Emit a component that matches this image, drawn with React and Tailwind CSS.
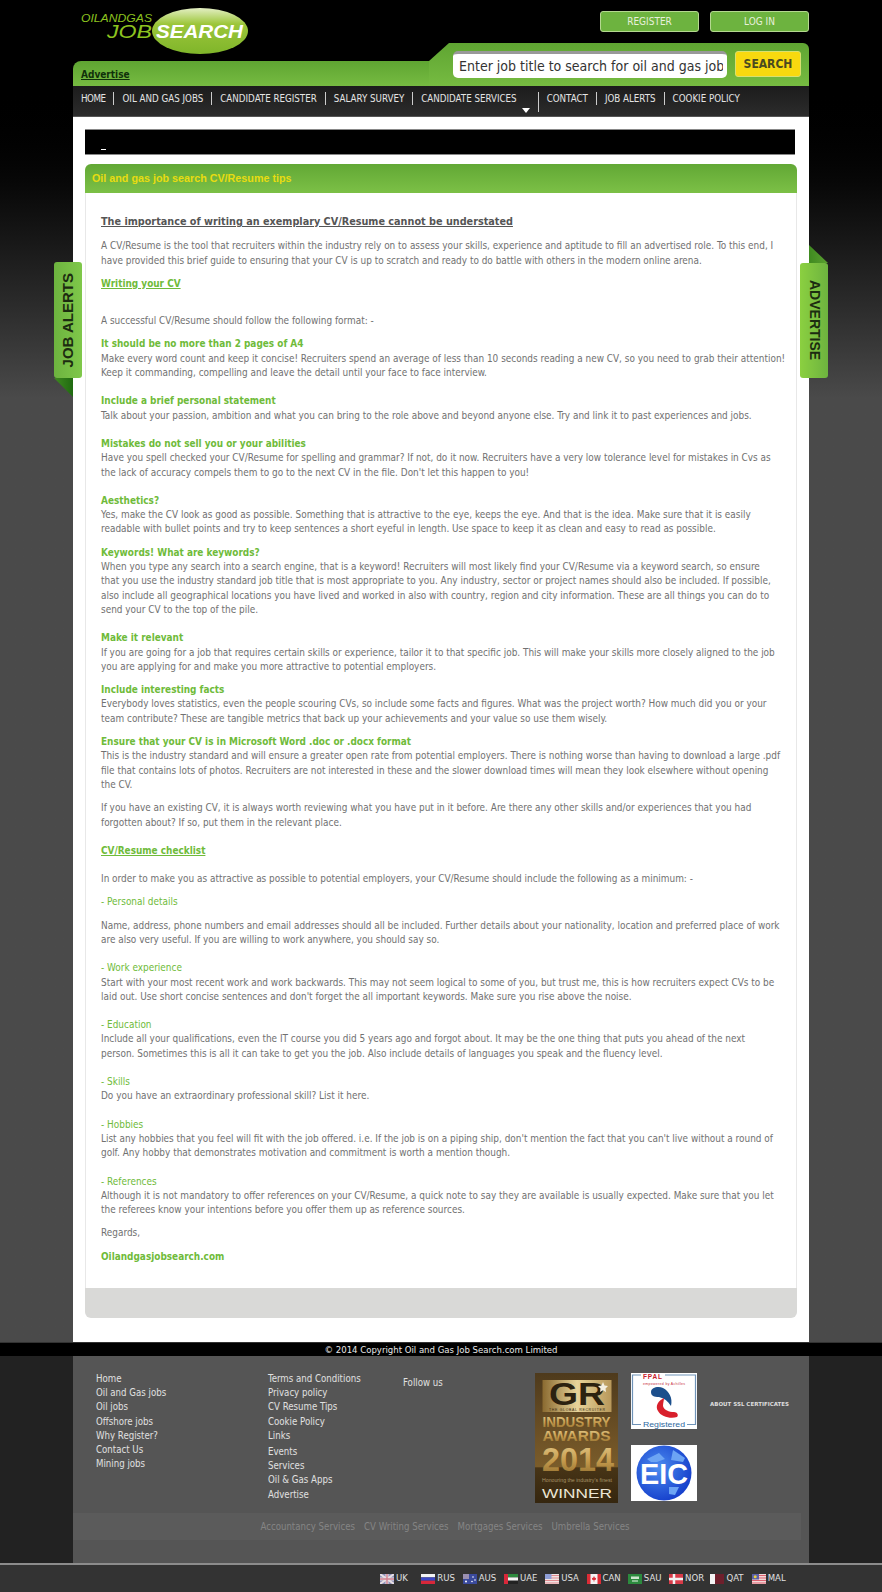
import React from 'react';

const menu = ['HOME', 'OIL AND GAS JOBS', 'CANDIDATE REGISTER', 'SALARY SURVEY'];
const menu2 = ['CONTACT', 'JOB ALERTS', 'COOKIE POLICY'];

const footer1 = ['Home', 'Oil and Gas jobs', 'Oil jobs', 'Offshore jobs', 'Why Register?', 'Contact Us', 'Mining jobs'];
const footer2 = ['Terms and Conditions', 'Privacy policy', 'CV Resume Tips', 'Cookie Policy', 'Links'];
const footer3 = ['Events', 'Services', 'Oil & Gas Apps', 'Advertise'];
const services = ['Accountancy Services', 'CV Writing Services', 'Mortgages Services', 'Umbrella Services'];

function Head({ children, className = '' }) {
    return <div className={`font-bold text-[#6fbb3a] ${className}`}>{children}</div>;
}

function Sub({ children, className = '' }) {
    return <div className={`text-[#6fbb3a] ${className}`}>{children}</div>;
}

function Logo() {
    return (
        <svg width="180" height="58" viewBox="0 0 180 58" className="block">
            <defs>
                <linearGradient id="egg" x1="0" y1="0" x2="0" y2="1">
                    <stop offset="0" stopColor="#e4efc4" />
                    <stop offset="0.35" stopColor="#9cc63a" />
                    <stop offset="1" stopColor="#7fb52a" />
                </linearGradient>
            </defs>
            <ellipse cx="127" cy="31" rx="48" ry="23" fill="url(#egg)" />
            <text x="8" y="21.500" fontFamily="'Liberation Sans', sans-serif" fontStyle="italic" fontSize="11.500" fill="#8cc21f" textLength="71" lengthAdjust="spacingAndGlyphs">OILANDGAS</text>
            <text x="34" y="37.500" fontFamily="'Liberation Sans', sans-serif" fontStyle="italic" fontSize="19" fill="#8cc21f" textLength="45" lengthAdjust="spacingAndGlyphs">JOB</text>
            <text x="83" y="37.500" fontFamily="'Liberation Sans', sans-serif" fontStyle="italic" fontWeight="bold" fontSize="19" fill="#ffffff" textLength="87" lengthAdjust="spacingAndGlyphs">SEARCH</text>
        </svg>
    );
}

function Flag({ code }) {
    const cls = 'block w-[14px] h-[10px] shrink-0';
    if (code === 'UK') return (
        <svg className={cls} viewBox="0 0 14 10"><rect width="14" height="10" fill="#8c8fb8" /><path d="M0 0L14 10M14 0L0 10" stroke="#e8e0e4" strokeWidth="2" /><path d="M7 0V10M0 5H14" stroke="#e8e0e4" strokeWidth="3" /><path d="M7 0V10M0 5H14" stroke="#d08090" strokeWidth="1.400" /></svg>
    );
    if (code === 'RUS') return (
        <svg className={cls} viewBox="0 0 14 10"><rect width="14" height="3.400" fill="#f2f2f2" /><rect y="3.400" width="14" height="3.300" fill="#3b46c4" /><rect y="6.700" width="14" height="3.300" fill="#d8283a" /></svg>
    );
    if (code === 'AUS') return (
        <svg className={cls} viewBox="0 0 14 10"><rect width="14" height="10" fill="#3a4a9c" /><rect width="6" height="5" fill="#9a8fb0" /><circle cx="10" cy="3" r=".8" fill="#fff" /><circle cx="12" cy="6" r=".8" fill="#fff" /><circle cx="9" cy="7.500" r=".8" fill="#fff" /><circle cx="3" cy="7.500" r="1" fill="#fff" /></svg>
    );
    if (code === 'UAE') return (
        <svg className={cls} viewBox="0 0 14 10"><rect width="14" height="3.400" fill="#2e8a3e" /><rect y="3.400" width="14" height="3.300" fill="#f4f4f4" /><rect y="6.700" width="14" height="3.300" fill="#222" /><rect width="4" height="10" fill="#d8283a" /></svg>
    );
    if (code === 'USA') return (
        <svg className={cls} viewBox="0 0 14 10"><rect width="14" height="10" fill="#f0e4e4" /><path d="M0 1.500H14M0 4H14M0 6.500H14M0 9H14" stroke="#e08a90" strokeWidth="1.100" /><rect width="6.500" height="5" fill="#8f9fd8" /></svg>
    );
    if (code === 'CAN') return (
        <svg className={cls} viewBox="0 0 14 10"><rect width="14" height="10" fill="#f4f4f4" /><rect width="3.500" height="10" fill="#dc2c36" /><rect x="10.500" width="3.500" height="10" fill="#dc2c36" /><path d="M7 2L8 4L9.200 3.800L8.600 6L7.400 6V7.500H6.600V6L5.400 6L4.800 3.800L6 4Z" fill="#dc2c36" /></svg>
    );
    if (code === 'SAU') return (
        <svg className={cls} viewBox="0 0 14 10"><rect width="14" height="10" fill="#2c8a3e" /><rect x="3" y="2.500" width="8" height="2.500" fill="#cfe6cf" /><rect x="4" y="6.500" width="6" height="1" fill="#e8f2e8" /></svg>
    );
    if (code === 'NOR') return (
        <svg className={cls} viewBox="0 0 14 10"><rect width="14" height="10" fill="#d83a48" /><path d="M5 0V10M0 5H14" stroke="#f2f2f2" strokeWidth="2.500" /></svg>
    );
    if (code === 'QAT') return (
        <svg className={cls} viewBox="0 0 14 10"><rect width="14" height="10" fill="#6e1f2c" /><rect width="5" height="10" fill="#f4f4f4" /></svg>
    );
    return (
        <svg className={cls} viewBox="0 0 14 10"><rect width="14" height="10" fill="#f2d8d8" /><path d="M0 1.500H14M0 4H14M0 6.500H14M0 9H14" stroke="#dc6070" strokeWidth="1.100" /><rect width="7" height="5.500" fill="#5a60a8" /><circle cx="3.200" cy="2.700" r="1.500" fill="#e8d040" /></svg>
    );
}

function Award() {
    const f = "'Liberation Sans', sans-serif";
    return (
        <svg width="83" height="130" viewBox="0 0 83 130" className="block">
            <defs>
                <linearGradient id="brown" x1="0" y1="0" x2="0" y2="1">
                    <stop offset="0" stopColor="#4e3a1c" />
                    <stop offset="0.5" stopColor="#6e5226" />
                    <stop offset="0.72" stopColor="#7a5c2a" />
                    <stop offset="0.73" stopColor="#473416" />
                    <stop offset="1" stopColor="#35260f" />
                </linearGradient>
                <linearGradient id="plate" x1="0" y1="0" x2="1" y2="0">
                    <stop offset="0" stopColor="#8a6a30" />
                    <stop offset="0.5" stopColor="#e8d49a" />
                    <stop offset="1" stopColor="#b8985a" />
                </linearGradient>
                <linearGradient id="gold" x1="0" y1="0" x2="0" y2="1">
                    <stop offset="0" stopColor="#e8cf90" />
                    <stop offset="0.55" stopColor="#c49a4c" />
                    <stop offset="1" stopColor="#8c6a2c" />
                </linearGradient>
            </defs>
            <rect width="83" height="130" fill="url(#brown)" />
            <rect x="7.500" y="7" width="69" height="32" fill="url(#plate)" />
            <text x="14" y="32" fontFamily={f} fontWeight="bold" fontSize="32" fill="#2c2210" textLength="56" lengthAdjust="spacingAndGlyphs">GR</text>
            <path d="M68 9L69.500 12.500L73 13L70.500 15.500L71 19L68 17.300L65 19L65.500 15.500L63 13L66.500 12.500Z" fill="#f4efe0" />
            <text x="14" y="38" fontFamily={f} fontSize="3.500" fill="#3a2c14" textLength="56">THE GLOBAL RECRUITER</text>
            <text x="7.500" y="54" fontFamily={f} fontWeight="bold" fontSize="14" fill="url(#gold)" textLength="68" lengthAdjust="spacingAndGlyphs">INDUSTRY</text>
            <text x="7.500" y="68" fontFamily={f} fontWeight="bold" fontSize="14" fill="url(#gold)" textLength="68" lengthAdjust="spacingAndGlyphs">AWARDS</text>
            <text x="7" y="98" fontFamily={f} fontWeight="bold" fontSize="34" fill="url(#gold)" textLength="72" lengthAdjust="spacingAndGlyphs">2014</text>
            <text x="7" y="109" fontFamily={f} fontSize="4.800" fill="#a89468" textLength="70" lengthAdjust="spacingAndGlyphs">Honouring the industry's finest</text>
            <text x="7" y="125" fontFamily={f} fontSize="13" fill="#ece6d6" textLength="70" lengthAdjust="spacingAndGlyphs">WINNER</text>
        </svg>
    );
}

function Fpal() {
    const f = "'Liberation Sans', sans-serif";
    return (
        <div className="w-[66px] h-[56px] bg-white">
            <svg width="66" height="56" viewBox="0 0 66 56" className="block">
                <path d="M10 2H1.500V51.500H10M56 51.500H64.500V2H34" fill="none" stroke="#6f93b8" strokeWidth="1.200" />
                <path d="M20 19C20 14 28 13 32 15C38 18 42 25 40 33C37 28 33 25 28 24C23 24 20 23 20 19Z" fill="#1c4f8c" />
                <path d="M33 25C27 28 24 33 27 38C30 44 40 46 46 44C48 42 46 39 43 39C38 39 33 37 32 33C32 30 33 27 33 25Z" fill="#d8202c" />
                <text x="12" y="6" fontSize="6.500" fontWeight="bold" fill="#c8202c" fontFamily={f} textLength="19">FPAL</text>
                <text x="12" y="12" fontSize="3.500" fill="#c83040" fontFamily={f} textLength="42">empowered by Achilles</text>
                <text x="12" y="54" fontSize="8" fill="#2f6aa0" fontFamily={f} textLength="42" lengthAdjust="spacingAndGlyphs">Registered</text>
            </svg>
        </div>
    );
}

function Eic() {
    return (
        <div className="w-[66px] h-[56px] bg-white">
            <svg width="66" height="56" viewBox="0 0 66 56" className="block">
                <defs>
                    <radialGradient id="globe" cx="0.4" cy="0.4" r="0.7">
                        <stop offset="0" stopColor="#4c8cf0" />
                        <stop offset="1" stopColor="#1038c8" />
                    </radialGradient>
                </defs>
                <circle cx="33" cy="28" r="27.500" fill="url(#globe)" />
                <path d="M16 14L28 8L34 14L26 17L20 17ZM42 5L54 13L52 17L40 15ZM38 42L48 42L44 50L38 49Z" fill="#6ca4f4" />
                <text x="9" y="39" fontSize="30" fontWeight="bold" fill="#ffffff" fontFamily="'Liberation Sans', sans-serif" textLength="48" lengthAdjust="spacingAndGlyphs">EIC</text>
            </svg>
        </div>
    );
}

function App() {
    return (
        <div className="relative h-[1592px] overflow-hidden bg-gradient-to-b from-black from-[5%] to-[#4a4a4a] to-[25%] [font-family:'DejaVu_Sans_Condensed','DejaVu_Sans','Liberation_Sans',sans-serif] [font-stretch:condensed]">
            <div className="relative z-10 w-[736px] mx-auto">
                {/* header */}
                <div className="h-[43px] flex justify-between">
                    <div className="h-[43px]"><Logo /></div>
                    <div className="flex gap-[11px] pt-[11px]">
                        <a className="w-[99px] h-[21px] rounded-[3px] border border-[#b4d890] bg-[#6db33f] text-[#e8f0dc] text-[10px] leading-[20px] text-center">REGISTER</a>
                        <a className="w-[99px] h-[21px] rounded-[3px] border border-[#b4d890] bg-[#6db33f] text-[#e8f0dc] text-[10px] leading-[20px] text-center">LOG IN</a>
                    </div>
                </div>
                <div className="relative h-[43px]">
                    <div className="absolute left-0 right-0 bottom-0 h-[25px] rounded-tl-[8px] bg-gradient-to-b from-[#5fa532] to-[#76bb41]" />
                    <div className="absolute right-0 top-0 bottom-0 w-[380px] rounded-tr-[6px] bg-gradient-to-b from-[#5fa532] to-[#76bb41] [clip-path:polygon(0_18px,20px_0,100%_0,100%_100%,0_100%)]" />
                    <div className="absolute left-[8px] bottom-[4px] text-[10px] leading-[14px] font-bold text-[#10300a] underline">Advertise</div>
                    <div className="absolute left-[380px] top-[8px] h-[27px] w-[274px] rounded-[5px] bg-white border-t-[3px] border-t-[#999] flex items-center overflow-hidden">
                        <input readOnly value="Enter job title to search for oil and gas jobs" className="w-full pl-[6px] pr-[4px] text-[14px] bg-transparent text-[#333] outline-none [font-family:inherit] [font-stretch:condensed]" />
                    </div>
                    <div className="absolute left-[662px] top-[8px] h-[26px] w-[66px] rounded-[3px] bg-[#f8d90f] border border-[#d8e070] text-[#4a4a20] text-[12px] font-bold leading-[24px] text-center">SEARCH</div>
                </div>
                {/* nav */}
                <div className="h-[31px] bg-gradient-to-b from-[#1c1c1c] to-[#2c2c2c] border-b border-b-[#555] flex items-start pl-[8px] pt-[6px] text-[9.700px] leading-[13px] text-[#e4e4e4]">
                    {menu.map((m, i) => (
                        <span key={m} className={i === 0 ? 'pr-[8px] tracking-[-0.5px]' : 'border-l border-[#ccc] px-[8px]'}>{m}</span>
                    ))}
                    <span className="relative border-l border-[#ccc] pl-[8px] pr-[21px] h-[13px]">
                        CANDIDATE SERVICES
                        <span className="absolute right-[8px] top-[16px] w-0 h-0 border-l-[4px] border-r-[4px] border-t-[5px] border-l-transparent border-r-transparent border-t-white" />
                    </span>
                    <span className="border-l border-[#ccc] h-[20px] w-0" />
                    {menu2.map((m, i) => (
                        <span key={m} className={i === 0 ? 'px-[8px]' : 'border-l border-[#ccc] px-[8px]'}>{m}</span>
                    ))}
                </div>
                {/* main panel */}
                <div className="bg-white h-[1225px] px-[12px] pt-[12px]">
                    <div className="w-[710px] h-[26px] bg-black border-t border-b border-[#888] relative">
                        <span className="absolute left-[16px] top-[19px] w-[5px] h-px bg-white" />
                    </div>
                    <div className="mt-[9px] w-[712px] h-[29px] rounded-t-[6px] bg-gradient-to-b from-[#62a835] to-[#7cc046] pl-[7px] text-[10.750px] leading-[28px] font-bold text-[#e8dc10] [font-family:'Liberation_Sans',sans-serif]">
                        Oil and gas job search CV/Resume tips
                    </div>
                    <div className="w-[712px] h-[1095px] border-x border-[#e8e8e8] pl-[15px] pr-[11px] text-[9.940px] leading-[14.300px] text-[#717171]">
                        <div className="pt-[22px] text-[10.750px] font-bold underline text-[#555]">The importance of writing an exemplary CV/Resume cannot be understated</div>
                        <p className="mt-[10px]">A CV/Resume is the tool that recruiters within the industry rely on to assess your skills, experience and aptitude to fill an advertised role. To this end, I have provided this brief guide to ensuring that your CV is up to scratch and ready to do battle with others in the modern online arena.</p>
                        <Head className="mt-[9px] underline">Writing your CV</Head>
                        <p className="mt-[23px]">A successful CV/Resume should follow the following format: -</p>
                        <Head className="mt-[9px]">It should be no more than 2 pages of A4</Head>
                        <p className="whitespace-nowrap">Make every word count and keep it concise! Recruiters spend an average of less than 10 seconds reading a new CV, so you need to grab their attention!<br />Keep it commanding, compelling and leave the detail until your face to face interview.</p>
                        <Head className="mt-[14px]">Include a brief personal statement</Head>
                        <p>Talk about your passion, ambition and what you can bring to the role above and beyond anyone else. Try and link it to past experiences and jobs.</p>
                        <Head className="mt-[14px]">Mistakes do not sell you or your abilities</Head>
                        <p>Have you spell checked your CV/Resume for spelling and grammar? If not, do it now. Recruiters have a very low tolerance level for mistakes in Cvs as the lack of accuracy compels them to go to the next CV in the file. Don't let this happen to you!</p>
                        <Head className="mt-[14px]">Aesthetics?</Head>
                        <p>Yes, make the CV look as good as possible. Something that is attractive to the eye, keeps the eye. And that is the idea. Make sure that it is easily readable with bullet points and try to keep sentences a short eyeful in length. Use space to keep it as clean and easy to read as possible.</p>
                        <Head className="mt-[9px]">Keywords! What are keywords?</Head>
                        <p className="whitespace-nowrap">When you type any search into a search engine, that is a keyword! Recruiters will most likely find your CV/Resume via a keyword search, so ensure<br />that you use the industry standard job title that is most appropriate to you. Any industry, sector or project names should also be included. If possible,<br />also include all geographical locations you have lived and worked in also with country, region and city information. These are all things you can do to<br />send your CV to the top of the pile.</p>
                        <Head className="mt-[14px]">Make it relevant</Head>
                        <p>If you are going for a job that requires certain skills or experience, tailor it to that specific job. This will make your skills more closely aligned to the job you are applying for and make you more attractive to potential employers.</p>
                        <Head className="mt-[9px]">Include interesting facts</Head>
                        <p>Everybody loves statistics, even the people scouring CVs, so include some facts and figures. What was the project worth? How much did you or your team contribute? These are tangible metrics that back up your achievements and your value so use them wisely.</p>
                        <Head className="mt-[9px]">Ensure that your CV is in Microsoft Word .doc or .docx format</Head>
                        <p>This is the industry standard and will ensure a greater open rate from potential employers. There is nothing worse than having to download a large .pdf file that contains lots of photos. Recruiters are not interested in these and the slower download times will mean they look elsewhere without opening the CV.</p>
                        <p className="mt-[9px]">If you have an existing CV, it is always worth reviewing what you have put in it before. Are there any other skills and/or experiences that you had forgotten about? If so, put them in the relevant place.</p>
                        <Head className="mt-[14px] underline">CV/Resume checklist</Head>
                        <p className="mt-[14px]">In order to make you as attractive as possible to potential employers, your CV/Resume should include the following as a minimum: -</p>
                        <Sub className="mt-[9px]">- Personal details</Sub>
                        <p className="mt-[9px]">Name, address, phone numbers and email addresses should all be included. Further details about your nationality, location and preferred place of work are also very useful. If you are willing to work anywhere, you should say so.</p>
                        <Sub className="mt-[14px]">- Work experience</Sub>
                        <p>Start with your most recent work and work backwards. This may not seem logical to some of you, but trust me, this is how recruiters expect CVs to be laid out. Use short concise sentences and don't forget the all important keywords. Make sure you rise above the noise.</p>
                        <Sub className="mt-[14px]">- Education</Sub>
                        <p>Include all your qualifications, even the IT course you did 5 years ago and forgot about. It may be the one thing that puts you ahead of the next<br />person. Sometimes this is all it can take to get you the job. Also include details of languages you speak and the fluency level.</p>
                        <Sub className="mt-[14px]">- Skills</Sub>
                        <p>Do you have an extraordinary professional skill? List it here.</p>
                        <Sub className="mt-[14px]">- Hobbies</Sub>
                        <p>List any hobbies that you feel will fit with the job offered. i.e. If the job is on a piping ship, don't mention the fact that you can't live without a round of golf. Any hobby that demonstrates motivation and commitment is worth a mention though.</p>
                        <Sub className="mt-[14px]">- References</Sub>
                        <p>Although it is not mandatory to offer references on your CV/Resume, a quick note to say they are available is usually expected. Make sure that you let the referees know your intentions before you offer them up as reference sources.</p>
                        <p className="mt-[9px]">Regards,</p>
                        <Head className="mt-[9px]">Oilandgasjobsearch.com</Head>
                    </div>
                    <div className="w-[712px] h-[30px] rounded-b-[6px] bg-[#d9d9d7]" />
                </div>
            </div>

            {/* side tabs */}
            <div className="absolute z-20 left-[54px] top-[262px] w-[28px] h-[116px] rounded-[3px] bg-gradient-to-r from-[#6db33f] to-[#7fc84a] flex items-center justify-center">
                <span className="[writing-mode:vertical-rl] rotate-180 text-[15px] font-bold text-[#1c2c10] [font-family:'Liberation_Sans',sans-serif] [font-stretch:normal]">JOB ALERTS</span>
            </div>
            <div className="absolute z-10 left-[54px] top-[378px] w-[19px] h-[19px] bg-gradient-to-r from-[#3f8a20] to-[#1f6a10] [clip-path:polygon(0_0,100%_0,100%_100%)]" />
            <div className="absolute z-20 left-[800px] top-[263px] w-[28px] h-[115px] rounded-[3px] bg-gradient-to-r from-[#8bd040] to-[#6db33f] flex items-center justify-center">
                <span className="[writing-mode:vertical-rl] text-[14px] font-bold text-[#1c2c10] [font-family:'Liberation_Sans',sans-serif] [font-stretch:normal]">ADVERTISE</span>
            </div>
            <div className="absolute z-10 left-[809px] top-[245px] w-[19px] h-[18px] bg-gradient-to-r from-[#3f8a20] to-[#5aa030] [clip-path:polygon(0_0,100%_100%,0_100%)]" />

            {/* footer */}
            <div className="absolute left-0 right-0 top-[1342px] z-10">
                <div className="h-[14px] bg-black border-t border-[#333] text-center text-[9.500px] leading-[13px] text-[#e8e8e8]">© 2014 Copyright Oil and Gas Job Search.com Limited</div>
                <div className="h-[207px] bg-[#222]">
                    <div className="relative w-[736px] h-[207px] mx-auto bg-[#555] text-[9.600px] text-[#e0e0e0]">
                        <div className="flex pt-[16px] pl-[23px]">
                            <div className="w-[172px] leading-[14.200px]">
                                {footer1.map(l => <div key={l}>{l}</div>)}
                            </div>
                            <div className="w-[135px] leading-[14.200px]">
                                {footer2.map(l => <div key={l}>{l}</div>)}
                                <div className="mt-[2px]">{footer3.map(l => <div key={l}>{l}</div>)}</div>
                            </div>
                            <div className="w-[132px] pt-[4px] leading-[14px]">Follow us</div>
                            <div className="mt-[1px]"><Award /></div>
                            <div className="ml-[13px] mt-[1px] flex flex-col gap-[16px]">
                                <Fpal />
                                <Eic />
                            </div>
                            <div className="ml-[13px] mt-[25px] text-[5.500px] leading-[14px] font-bold whitespace-nowrap text-[#ddd] [font-stretch:normal] [font-family:'DejaVu_Sans',sans-serif]">ABOUT SSL CERTIFICATES</div>
                        </div>
                        <div className="absolute left-0 right-[8px] top-[157px] h-[27px] flex justify-center gap-[9px] pl-[16px] bg-[#5b5b5b] text-[#858585] leading-[27px]">
                            {services.map(s => <span key={s}>{s}</span>)}
                        </div>
                    </div>
                </div>
                <div className="h-[29px] bg-[#333] border-t-2 border-[#8c8c8c] flex items-center justify-end pr-[89px] text-[9.500px] text-[#e0e0e0]">
                    {['UK', 'RUS', 'AUS', 'UAE', 'USA', 'CAN', 'SAU', 'NOR', 'QAT', 'MAL'].map(c => (
                        <span key={c} className="w-[41.300px] flex items-center gap-[2px]"><Flag code={c} />{c}</span>
                    ))}
                </div>
            </div>
        </div>
    );
}

export default App;
